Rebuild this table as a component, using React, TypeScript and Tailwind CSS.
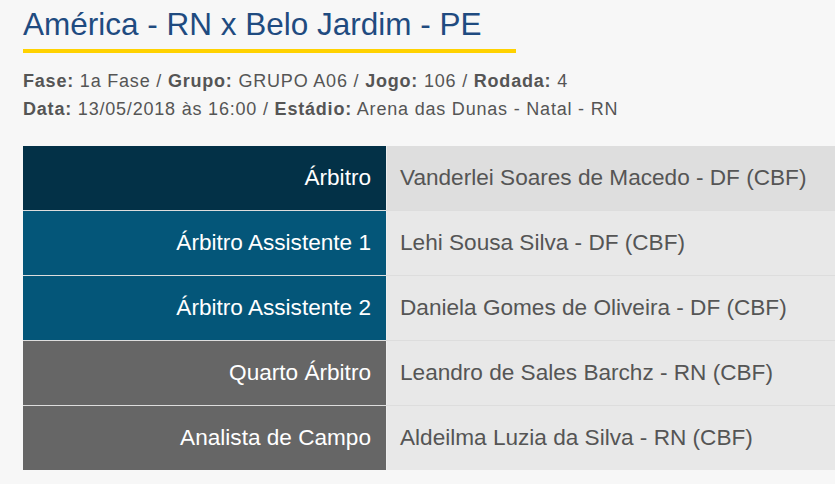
const officials = [
  { role: "Árbitro", name: "Vanderlei Soares de Macedo - DF (CBF)", roleBg: "bg-[#033147]", nameBg: "bg-[#dedede]" },
  { role: "Árbitro Assistente 1", name: "Lehi Sousa Silva - DF (CBF)", roleBg: "bg-[#045679]", nameBg: "bg-[#e8e8e8]" },
  { role: "Árbitro Assistente 2", name: "Daniela Gomes de Oliveira - DF (CBF)", roleBg: "bg-[#045679]", nameBg: "bg-[#e8e8e8]" },
  { role: "Quarto Árbitro", name: "Leandro de Sales Barchz - RN (CBF)", roleBg: "bg-[#666666]", nameBg: "bg-[#e8e8e8]" },
  { role: "Analista de Campo", name: "Aldeilma Luzia da Silva - RN (CBF)", roleBg: "bg-[#666666]", nameBg: "bg-[#e8e8e8]" },
];

export default function App() {
  return (
    <div className="min-h-[484px] w-[835px] overflow-hidden bg-[#f7f7f7] pl-[23px] pt-[5px] font-['Liberation_Sans',Arial,sans-serif]">
      <h1 className="inline-block border-b-4 border-[#ffd200] pb-[6px] pr-[34px] text-[31.5px] leading-[38px] font-normal text-[#1f4b80]">
        América - RN x Belo Jardim - PE
      </h1>

      <div className="mt-[14px] text-[18px] leading-[28px] tracking-[0.8px] text-[#555555]">
        <p>
          <b>Fase:</b> 1a Fase / <b>Grupo:</b> GRUPO A06 / <b>Jogo:</b> 106 / <b>Rodada:</b> 4
        </p>
        <p>
          <b>Data:</b> 13/05/2018 às 16:00 / <b>Estádio:</b> Arena das Dunas - Natal - RN
        </p>
      </div>

      <div className="mt-[23px] w-[830px] text-[22.6px]">
        {officials.map((o, i) => (
          <div key={i} className={`flex ${i > 0 ? "h-[65px] border-t border-[#dddddd]" : "h-[64px]"}`}>
            <div className={`flex w-[363px] shrink-0 items-center justify-end pr-[15px] text-white ${o.roleBg}`}>
              {o.role}
            </div>
            <div className={`flex flex-1 items-center border-l border-[#eeeeee] pl-[13px] text-[#555555] ${o.nameBg}`}>
              {o.name}
            </div>
          </div>
        ))}
      </div>
    </div>
  );
}
